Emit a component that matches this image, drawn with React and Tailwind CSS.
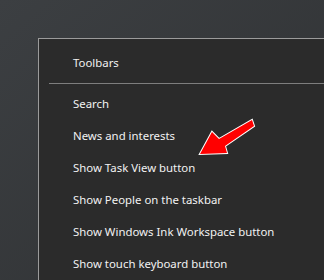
import React from 'react';

const items = [
    "Search",
    "News and interests",
    "Show Task View button",
    "Show People on the taskbar",
    "Show Windows Ink Workspace button",
    "Show touch keyboard button",
];

export default function App() {
    return (
        <div className="relative w-[324px] h-[280px] overflow-hidden bg-gradient-to-br from-[#3c3f42] to-[#2f3133] font-['Noto_Sans',sans-serif]">
            {/* Context menu */}
            <div className="absolute left-[38px] top-[38px] w-[300px] h-[260px] bg-[#2b2b2b] border border-[#9b9b9b] pt-[14px]">
                <div className="h-[20px] pl-[34px] text-[11.4px] leading-[20px] text-[#f2f2f2]">Toolbars</div>
                <div className="ml-[10px] mt-[10px] h-px bg-[#7e7e7e]" />
                <div className="flex flex-col pt-[10px]">
                    {items.map((label) => (
                        <div key={label} className="h-[32px] pl-[34px] text-[11.4px] leading-[20px] text-[#f2f2f2]">
                            {label}
                        </div>
                    ))}
                </div>
            </div>

            {/* Red arrow annotation */}
            <svg className="absolute left-0 top-0" width="324" height="280" viewBox="0 0 324 280">
                <polygon
                    points="200,154 212,132 219,139 252,120 254,126 225,146 227,153"
                    fill="#ff0000"
                    stroke="#ffffff"
                    strokeWidth="2"
                    strokeLinejoin="miter"
                    paintOrder="stroke"
                />
            </svg>
        </div>
    );
}
